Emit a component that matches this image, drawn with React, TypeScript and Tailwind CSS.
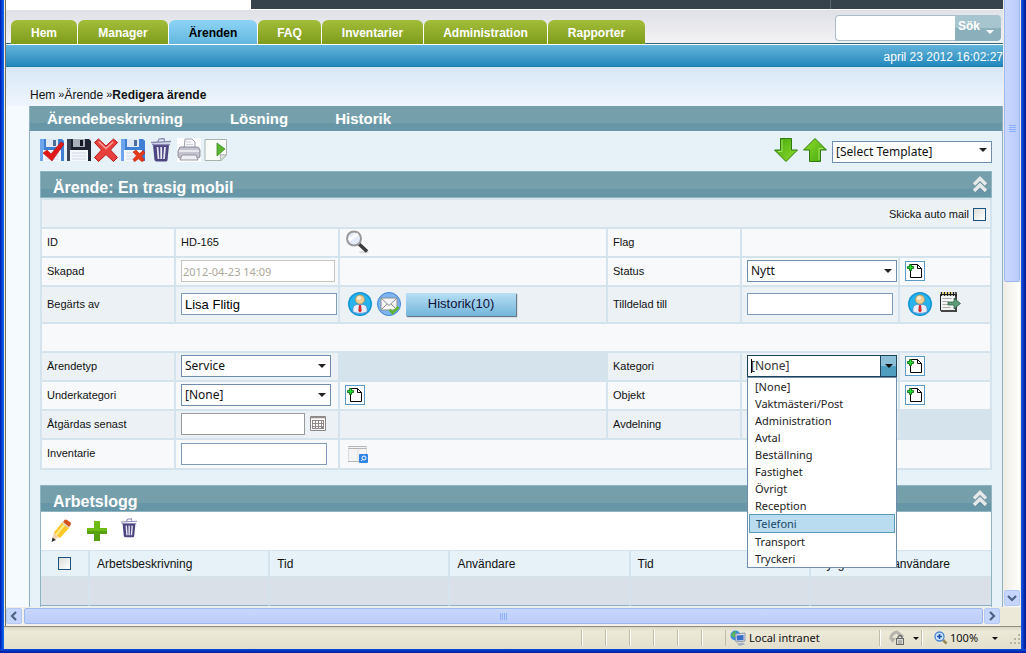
import type { ReactNode } from 'react'
import clsx from 'clsx'
import { twMerge } from 'tailwind-merge'

const tabs = [
  { label: 'Hem', width: 'w-[66px]' },
  { label: 'Manager', width: 'w-[90px]' },
  { label: 'Ärenden', width: 'w-[88px]', active: true },
  { label: 'FAQ', width: 'w-[63px]' },
  { label: 'Inventarier', width: 'w-[101px]' },
  { label: 'Administration', width: 'w-[123px]' },
  { label: 'Rapporter', width: 'w-[97px]' },
]

const categories = [
  '[None]',
  'Vaktmästeri/Post',
  'Administration',
  'Avtal',
  'Beställning',
  'Fastighet',
  'Övrigt',
  'Reception',
  'Telefoni',
  'Transport',
  'Tryckeri',
]

const logColumns = ['Arbetsbeskrivning', 'Tid', 'Användare', 'Tid', 'Nyligen valda användare']

/* ---------- icons ---------- */

function Floppy({ dark = false, children }: { dark?: boolean; children?: ReactNode }) {
  return (
    <svg viewBox="0 0 24 24" className="h-6 w-6">
      <path d="M0 1h22l2 2v20H0z" fill={dark ? '#1d2230' : '#3f7fd6'} />
      <path d="M0 1h4v22H0z" fill={dark ? '#3c4354' : '#6ea5ec'} />
      <rect x="6" y="1" width="12" height="8" fill={dark ? '#aab0bb' : '#dfe8f3'} />
      <rect x="13" y="2" width="3" height="6" fill={dark ? '#14171f' : '#4d6d9c'} />
      <rect x="3" y="12" width="18" height="11" fill="#f4f7fb" />
      <path d="M5 15h14M5 18h14M5 21h14" stroke="#cfd8e4" strokeWidth="1" />
      {children}
    </svg>
  )
}

function SaveCheckIcon() {
  return (
    <Floppy>
      <path d="M3 15l4-3 4 4L21 4l3 2-12 17z" fill="#e01818" stroke="#b80d0d" strokeWidth=".6" />
    </Floppy>
  )
}

function SaveDeleteIcon() {
  return (
    <Floppy>
      <path d="M12 14l3-2 3.500 3.500 4-3 1.500 2.500-3.500 3 3 4-2.500 1.800-3.500-3-4 3-1.500-2.500 3.500-3.500z" fill="#e63a1c" stroke="#c02410" strokeWidth=".6" />
    </Floppy>
  )
}

function CrossIcon() {
  return (
    <svg viewBox="0 0 24 24" className="h-6 w-6">
      <path
        d="M4.500 1L12 8l7.500-7L23.500 4.500 16.500 12l7 7.500-4 4-7.500-7-7.500 7L.5 19.500l7-7.500-7-7.500z"
        fill="#e8403c"
        stroke="#b51414"
        strokeWidth="1"
      />
      <path d="M4.500 3.500L12 10.500l7-6.500" fill="none" stroke="#f9a39d" strokeWidth="1.500" />
    </svg>
  )
}

function TrashIcon({ className }: { className?: string }) {
  return (
    <svg viewBox="2 0 20 24" className={twMerge('h-6 w-5', className)} fill="none">
      <path d="M4 7h16l-1.500 15q0 1.500-2 1.500H8q-2 0-2.500-1.500z" fill="#4c4680" />
      <path d="M8.500 9l1 12M12.200 9v12M16 9l-1 12" stroke="#e6e4f2" strokeWidth="1.800" />
      <path d="M2 4.500l20-1M9 3.500l1-2.500 5-.500.500 2.500M3 6.500h18" stroke="#8d8ab4" strokeWidth="1.300" />
    </svg>
  )
}

function PrinterIcon() {
  return (
    <svg viewBox="0 0 24 24" className="h-6 w-6">
      <rect width="24" height="24" fill="#fff" />
      <path d="M7 11l1-10h7l3 3v7z" fill="#f8f8fb" stroke="#9c9caa" />
      <path d="M9 4h5M9 6.500h7" stroke="#cdd0da" />
      <path d="M2 11q0-2 2-2h16q2 0 3 3v6q0 2-2 2H3q-2 0-2-2v-5z" fill="#c3c4cf" stroke="#777786" strokeWidth=".8" />
      <path d="M2 13h20" stroke="#f3f3f8" strokeWidth="1.500" />
      <path d="M5 17h14l2 5H3z" fill="#eeeef4" stroke="#83838f" strokeWidth=".8" />
    </svg>
  )
}

function PagePlayIcon() {
  return (
    <svg viewBox="0 0 24 24" className="h-6 w-6">
      <path d="M1 1.500h21.500V17L17 22.500H1z" fill="#fafcfa" stroke="#a9b3ad" />
      <path d="M22.500 17L17 22.500 16 16.500z" fill="#dfe5e1" stroke="#a9b3ad" />
      <path d="M13 5l8 6-8 7z" fill="#5cb531" stroke="#3c8a1c" strokeWidth=".8" />
    </svg>
  )
}

function ArrowIcon({ up = false }: { up?: boolean }) {
  return (
    <svg viewBox="0 0 24 24" className={clsx('h-6 w-6', up && 'rotate-180')}>
      <defs>
        <linearGradient id="arrowFill" x1="0" y1="0" x2="1" y2="1">
          <stop offset="0" stopColor="#45a80e" />
          <stop offset="1" stopColor="#8fdc2c" />
        </linearGradient>
      </defs>
      <path d="M6.500.5h11V12h6L12 23.500.5 12h6z" fill="url(#arrowFill)" stroke="#2c7a10" />
      <path d="M8 2v11.500H4" fill="none" stroke="#a5e463" strokeWidth="1" />
    </svg>
  )
}

function ChevronsIcon() {
  return (
    <svg viewBox="0 0 16 18" className="h-[18px] w-4" fill="none">
      <path d="M2 9l6-6 6 6M2 15.500l6-6 6 6" stroke="#4d7481" strokeWidth="4" opacity=".5" />
      <path d="M2 8.500l6-6 6 6M2 15l6-6 6 6" stroke="#e6e9ea" strokeWidth="3.500" />
    </svg>
  )
}

function SearchIcon() {
  return (
    <svg viewBox="0 0 24 24" className="h-6 w-6">
      <ellipse cx="19" cy="22" rx="5" ry="1" fill="#d5d7da" />
      <path d="M14 14l8 7.500" stroke="#3b3b3b" strokeWidth="3.500" />
      <circle cx="9" cy="8.500" r="7" fill="#e4ecfa" stroke="#999" strokeWidth="2" />
      <path d="M4 10l9-6" stroke="#fff" strokeWidth="3" />
    </svg>
  )
}

function PersonIcon() {
  return (
    <svg viewBox="0 0 24 24" className="h-6 w-6">
      <circle cx="12" cy="12" r="12" fill="#1495d8" />
      <circle cx="12" cy="12" r="10.500" fill="#27b3ec" />
      <path d="M5 20q-1-7 4-7.500h6q5 .5 4 7.500-7 3-14 0z" fill="#e6effb" stroke="#4f82c4" strokeWidth=".6" />
      <path d="M11 13h2l.7 6-1.700 1.500-1.700-1.500z" fill="#d8262c" />
      <circle cx="12" cy="7.500" r="4.500" fill="#f0cf94" stroke="#b58843" strokeWidth=".6" />
      <circle cx="11" cy="6" r="2" fill="#fbeccb" />
    </svg>
  )
}

function MailIcon() {
  return (
    <svg viewBox="0 0 24 24" className="h-6 w-6">
      <circle cx="12" cy="12" r="11.500" fill="#7db4ef" stroke="#3f84d4" />
      <path d="M4 6h16v12H4z" fill="#f5f5f3" stroke="#8b8f96" />
      <path d="M4 6l8 7.500L20 6M4 18l6-6M20 18l-6-6" fill="none" stroke="#8b8f96" />
      <path d="M12.500 17.500l3 3.500 6-6" fill="none" stroke="#5bb52b" strokeWidth="2.500" />
    </svg>
  )
}

function NotesIcon() {
  return (
    <svg viewBox="0 0 22 22" className="h-[22px] w-[22px]">
      <path d="M1.500 3.500h16v16h-16z" fill="#f4f4f4" stroke="#222" />
      <path d="M17 4v16M2 20h16" stroke="#444" strokeWidth="2" />
      <path d="M3.500 7.500h9M3.500 10.500h6M3.500 13.500h6M3.500 16.500h8" stroke="#aaa" />
      <path d="M2.500 1v4M5.500 1v4M8.500 1v4M11.500 1v4M14.500 1v4M17 1v4" stroke="#222" strokeWidth="1.500" />
      <path d="M3.500 1v2M6.500 1v2M9.500 1v2M12.500 1v2" stroke="#f0d24c" />
      <path d="M9 11h6V7l6.500 5.500L15 18v-4H9z" fill="#5d9b79" stroke="#255f42" strokeWidth=".7" />
    </svg>
  )
}

function CalendarIcon() {
  return (
    <svg viewBox="0 0 16 16" className="h-4 w-4">
      <path d="M.5.5h15v14H.5z" fill="#fff" stroke="#8c8585" />
      <path d="M1 1.500h14" stroke="#958f8f" strokeWidth="1.500" />
      <path d="M2 4h12v9H2z" fill="#8f8888" />
      <path d="M3 5h2v2H3zM6 5h2v2H6zM9 5h2v2H9zM12 5h1v2h-1zM3 8h2v2H3zM6 8h2v2H6zM9 8h2v2H9zM12 8h1v2h-1zM3 11h2v1H3zM6 11h2v1H6zM9 11h2v1H9z" fill="#fff" />
    </svg>
  )
}

function InventoryIcon() {
  return (
    <svg viewBox="0 0 20 18" className="h-[18px] w-5">
      <path d="M.5 1.500h18v15H.5z" fill="#f4f4f4" stroke="#dcdcdc" />
      <path d="M.5 1.500h18M.5 3.500h18M0 16.500h11" stroke="#b5b5b5" />
      <path d="M10 4v12" stroke="#e0e0e0" />
      <rect x="11" y="9" width="9" height="9" rx="1" fill="#2f86e4" />
      <circle cx="16" cy="13" r="2" fill="none" stroke="#fff" />
      <path d="M14.500 14.500L13 16" stroke="#fff" />
    </svg>
  )
}

function PencilIcon() {
  return (
    <svg viewBox="0 0 24 24" className="h-6 w-6">
      <path d="M3 21l2-8 6 5z" fill="#f1d3ad" />
      <path d="M2.500 23l1-4.500 3.500 2.500z" fill="#333" />
      <path d="M5 13.500L13.500 3l7 5.500L11 19z" fill="#fbc828" />
      <path d="M7 16l9-11" stroke="#fdeb8e" strokeWidth="2" />
      <path d="M14 3l1.500-2q1-1 2.500 0l3.500 2.500q1 1 0 2.500L20 8z" fill="#d4521d" />
      <path d="M13.500 3.500l6 5" stroke="#ddd3c4" strokeWidth="1.500" />
    </svg>
  )
}

function PlusIcon() {
  return (
    <svg viewBox="0 0 20 20" className="h-5 w-5">
      <path d="M7 0h6v7h7v6h-7v7H7v-7H0V7h7z" fill="#6fbb16" />
      <path d="M7 10h13v3h-7v7H7v-7H0v-3z" fill="#57a010" />
    </svg>
  )
}

function IntranetIcon() {
  return (
    <svg viewBox="0 0 16 16" className="h-4 w-4">
      <circle cx="5.500" cy="5.500" r="5" fill="#3c8fe0" />
      <path d="M1 5q2-4 6-4-3 2-1 5-3 3-5-1z" fill="#58b856" />
      <path d="M5 4l10-1v8l-9 1z" fill="#d8dde8" stroke="#7d879c" strokeWidth=".8" />
      <path d="M6.500 5.500L13.500 5v5l-6.500.5z" fill="#3a6ec8" />
      <path d="M7 13.500l6-1 2 2-6 1.500z" fill="#a9b0c0" />
    </svg>
  )
}

function LockIcon() {
  return (
    <svg viewBox="0 0 16 16" className="h-4 w-4" fill="none">
      <path d="M2 9q0-6 6-7l6 5" stroke="#b5b5ae" strokeWidth="3" />
      <path d="M0 8l3.500 5L7 8z" fill="#b5b5ae" />
      <path d="M9 9V7q2-3 4 0v2" stroke="#666" strokeWidth="1.300" />
      <rect x="7.500" y="8.500" width="7" height="6" fill="#dcdcd6" stroke="#666" />
      <path d="M9 11h4M9 13h4" stroke="#888" />
    </svg>
  )
}

function ZoomIcon() {
  return (
    <svg viewBox="0 0 14 14" className="h-[14px] w-[14px]">
      <path d="M9 9l3.500 3.500" stroke="#9a8a58" strokeWidth="2.500" />
      <circle cx="5.500" cy="5.500" r="4.500" fill="#d4e8fd" stroke="#4b86d4" strokeWidth="1.300" />
      <path d="M3 5.500h5M5.500 3v5" stroke="#1c50b4" strokeWidth="1.600" />
    </svg>
  )
}

function Caret({ className }: { className?: string }) {
  return (
    <svg viewBox="0 0 8 4" className={twMerge('pointer-events-none h-1 w-2', className)}>
      <path d="M0 0h8L4 4z" fill="currentColor" />
    </svg>
  )
}

/* ---------- form parts ---------- */

function Cell({ children, light, className }: { children?: ReactNode; light?: boolean; className?: string }) {
  return (
    <div className={twMerge('flex min-w-0 items-center pb-px pl-[5px]', light ? 'bg-[#f7f9fb]' : 'bg-[#ecf1f6]', className)}>
      {children}
    </div>
  )
}

function Select({ id, value, label, className }: { id: string; value: string; label?: string; className?: string }) {
  return (
    <div className={clsx('relative h-[22px]', className)}>
      <select
        id={id}
        aria-label={label}
        className="h-full w-full appearance-none border border-[#6f8dae] bg-white pl-[3px] font-['Noto_Sans',sans-serif] text-xs text-[#111]"
      >
        <option>{value}</option>
      </select>
      <Caret className="absolute right-[5px] top-[9px] text-[#222]" />
    </div>
  )
}

function CategorySelect() {
  return (
    <div className="relative h-[22px] w-[150px]">
      <select
        id="kategori"
        defaultValue="[None]"
        className="h-full w-full appearance-none border border-[#1c4257] bg-white pl-[3px] font-['Noto_Sans',sans-serif] text-xs text-[#333]"
      >
        {categories.map((name) => (
          <option key={name}>{name}</option>
        ))}
      </select>
      <span className="absolute left-1 top-1 h-[14px] w-px bg-black" />
      <span className="pointer-events-none absolute right-px top-px flex h-5 w-4 items-center justify-center border-l border-[#1c4257] bg-linear-to-b from-[#8cc0d8] from-50% to-[#4f9dbf] to-50% text-[#111]">
        <Caret />
      </span>
      <ul
        role="listbox"
        aria-label="Kategori"
        className="absolute left-0 top-[22px] z-10 w-[150px] border border-[#6f8dae] bg-white px-px font-['Noto_Sans',sans-serif] text-[11px] leading-[17px] text-[#222]"
      >
        {categories.map((name) => (
          <li
            key={name}
            role="option"
            aria-selected={name === 'Telefoni'}
            className={clsx(
              'border-[#5b9bb8] pl-[6px]',
              name === 'Telefoni' && 'border bg-[#b9dcf1] text-[#1c4a66]',
            )}
          >
            {name}
          </li>
        ))}
      </ul>
    </div>
  )
}

function AddButton({ label }: { label: string }) {
  return (
    <button
      type="button"
      aria-label={label}
      className="flex h-5 w-5 items-center justify-center border border-[#5b9bc8] bg-white"
    >
      <svg viewBox="0 0 18 18" className="h-[18px] w-[18px]">
        <path d="M4.500 2.500h7l4 4v9h-11z" fill="#fff" stroke="#000" />
        <path d="M11.500 2.500v4h4" fill="none" stroke="#000" />
        <path d="M3.500 2.500h2v2h2v2h-2v2h-2v-2h-2v-2h2z" fill="#1fe02a" stroke="#075c0b" strokeWidth=".8" />
      </svg>
    </button>
  )
}

function TextInput({ id, value, className }: { id: string; value?: string; className?: string }) {
  return (
    <input
      id={id}
      defaultValue={value}
      className={twMerge('h-[22px] border border-[#7f9db9] bg-white px-[3px] text-[13px] text-black', className)}
    />
  )
}

function Checkbox({ id, label }: { id: string; label?: string }) {
  return (
    <input
      id={id}
      aria-label={label}
      type="checkbox"
      className="h-[13px] w-[13px] appearance-none border border-[#1c5180] bg-linear-to-br from-[#dcdcd7] to-white"
    />
  )
}

function SectionHeader({ title }: { title: string }) {
  return (
    <div className="flex h-[27px] items-center justify-between border border-[#8fb5c0] bg-linear-to-b from-[#769fac] from-70% to-[#6797a7] to-70% pl-3 pr-[3px]">
      <h2 className="pt-[6px] text-base font-bold leading-5 text-white">{title}</h2>
      <button aria-label={'Fäll ihop ' + title}>
        <ChevronsIcon />
      </button>
    </div>
  )
}

function TicketForm() {
  return (
    <section>
      <SectionHeader title="Ärende: En trasig mobil" />
      <form className="grid grid-cols-[132px_162px_1fr_132px_156px_90px] grid-rows-[27px_27px_27px_35px_27px_27px_27px_27px_28px] gap-[2px] bg-[#d5e4ec] p-[2px] text-[11px] text-[#111]">
        <Cell className="col-span-6 justify-end gap-1 pb-0 pr-1 pt-px">
          <label htmlFor="automail">Skicka auto mail</label>
          <Checkbox id="automail" />
        </Cell>

        <Cell light>ID</Cell>
        <Cell light>HD-165</Cell>
        <Cell light>
          <button type="button" aria-label="Sök ärende">
            <SearchIcon />
          </button>
        </Cell>
        <Cell light>Flag</Cell>
        <Cell light className="col-span-2" />

        <Cell light>
          <label htmlFor="skapad">Skapad</label>
        </Cell>
        <Cell light>
          <input
            id="skapad"
            disabled
            defaultValue="2012-04-23 14:09"
            className="h-[22px] w-[154px] border border-[#c5c5bf] bg-white pl-px font-['Noto_Sans',sans-serif] text-[11px] text-[#aca899]"
          />
        </Cell>
        <Cell light />
        <Cell light>
          <label htmlFor="status">Status</label>
        </Cell>
        <Cell light>
          <Select id="status" value="Nytt" className="w-[150px]" />
        </Cell>
        <Cell light>
          <AddButton label="Ny status" />
        </Cell>

        <Cell>
          <label htmlFor="begarts">Begärts av</label>
        </Cell>
        <Cell>
          <TextInput id="begarts" value="Lisa Flitig" className="w-[156px]" />
        </Cell>
        <Cell className="gap-[5px] px-2">
          <button type="button" aria-label="Välj person">
            <PersonIcon />
          </button>
          <button type="button" aria-label="Skicka mail">
            <MailIcon />
          </button>
          <button
            type="button"
            className="h-[23px] w-[110px] bg-linear-to-b from-[#b8e0f4] to-[#71b5da] text-[13px] text-[#10103a] shadow-[1px_1px_1px_#6b7a84]"
          >
            Historik(10)
          </button>
        </Cell>
        <Cell>
          <label htmlFor="tilldelad">Tilldelad till</label>
        </Cell>
        <Cell>
          <TextInput id="tilldelad" className="w-[146px]" />
        </Cell>
        <Cell className="gap-[7px] px-2">
          <button type="button" aria-label="Välj handläggare">
            <PersonIcon />
          </button>
          <button type="button" aria-label="Tilldela" className="pb-1">
            <NotesIcon />
          </button>
        </Cell>

        <Cell light className="col-span-6" />

        <Cell>
          <label htmlFor="typ">Ärendetyp</label>
        </Cell>
        <Cell>
          <Select id="typ" value="Service" className="w-[150px]" />
        </Cell>
        <div />
        <Cell>
          <label htmlFor="kategori">Kategori</label>
        </Cell>
        <Cell>
          <CategorySelect />
        </Cell>
        <Cell>
          <AddButton label="Ny kategori" />
        </Cell>

        <Cell light>
          <label htmlFor="underkategori">Underkategori</label>
        </Cell>
        <Cell light>
          <Select id="underkategori" value="[None]" className="w-[150px]" />
        </Cell>
        <Cell light>
          <AddButton label="Ny underkategori" />
        </Cell>
        <Cell light>Objekt</Cell>
        <Cell light />
        <Cell light>
          <AddButton label="Nytt objekt" />
        </Cell>

        <Cell>
          <label htmlFor="atgardas">Åtgärdas senast</label>
        </Cell>
        <Cell className="gap-[5px]">
          <TextInput id="atgardas" className="w-[124px] border-[#999]" />
          <button type="button" aria-label="Välj datum">
            <CalendarIcon />
          </button>
        </Cell>
        <Cell />
        <Cell>Avdelning</Cell>
        <Cell />
        <div />

        <Cell light>
          <label htmlFor="inventarie">Inventarie</label>
        </Cell>
        <Cell light>
          <TextInput id="inventarie" className="w-[146px]" />
        </Cell>
        <Cell light className="col-span-4 px-2">
          <button type="button" aria-label="Sök inventarie">
            <InventoryIcon />
          </button>
        </Cell>
      </form>
    </section>
  )
}

function WorkLog() {
  return (
    <section className="mt-[15px]">
      <SectionHeader title="Arbetslogg" />
      <div className="border-x border-[#8fb5c0] bg-white">
        <div className="flex h-[38px] items-center gap-[14px] pl-2">
          <button aria-label="Redigera">
            <PencilIcon />
          </button>
          <button aria-label="Lägg till">
            <PlusIcon />
          </button>
          <button aria-label="Ta bort" className="pb-[6px]">
            <TrashIcon className="h-5 w-4" />
          </button>
        </div>
        <table className="w-full table-fixed border-separate border-spacing-0 text-xs text-[#111]">
          <thead>
            <tr className="h-[27px] bg-[#e6f2f7]">
              <th className="w-[49px] border-y border-r-2 border-[#d5e4ec] p-0 text-center">
                <div className="flex justify-center">
                  <Checkbox id="markera" label="Markera alla" />
                </div>
              </th>
              {logColumns.map((name, i) => (
                <th
                  key={i}
                  className="whitespace-nowrap border-y border-r-2 border-[#d5e4ec] p-0 pl-[7px] text-left font-normal last:border-r-0"
                >
                  {name}
                </th>
              ))}
            </tr>
          </thead>
          <tbody>
            <tr className="h-[29px] bg-[#dae0e7]">
              <td className="border-b border-r-2 border-b-[#8fb0c0] border-r-[#d5e4ec]" />
              {logColumns.map((_, i) => (
                <td key={i} className="border-b border-r-2 border-b-[#8fb0c0] border-r-[#d5e4ec] last:border-r-0" />
              ))}
            </tr>
            <tr className="h-[29px] bg-[#e6f2f7]">
              <td colSpan={6} />
            </tr>
          </tbody>
        </table>
      </div>
    </section>
  )
}

/* ---------- page ---------- */

function TopNav() {
  return (
    <header>
      <div className="flex h-[9px] bg-[#36434d]">
        <div className="w-[245px] bg-white" />
        <div className="flex-1 border-r border-[#5b6872]" />
        <div className="w-[172px]" />
      </div>
      <div className="flex h-[35px] items-end justify-between border-t border-white bg-linear-to-b from-[#e0e1e7] to-[#f3f3f5] pl-[5px] pr-[2px] shadow-[inset_0_-1px_0_#2f6675]">
        <nav className="flex h-6 gap-px bg-linear-to-b from-transparent from-20% to-white to-20%">
          {tabs.map((tab) => (
            <a
              key={tab.label}
              href="#"
              className={clsx(
                'flex items-center justify-center rounded-t-md pt-px text-xs font-bold',
                tab.width,
                tab.active
                  ? 'bg-linear-to-b from-[#8dd4f6] to-[#63b7de] text-black'
                  : 'bg-linear-to-b from-[#a2bd38] to-[#7f9c1c] text-white',
              )}
            >
              {tab.label}
            </a>
          ))}
        </nav>
        <div className="mb-[3px] flex h-[26px]">
          <input
            aria-label="Sök"
            className="w-[120px] rounded-l-sm border border-r-0 border-[#a9bcc8] bg-white px-1 text-xs"
          />
          <button className="flex w-[46px] justify-between rounded-r-sm bg-linear-to-b from-[#a6c5ce] from-50% to-[#8bb0bb] to-50% px-[3px] pt-[3px] text-xs font-bold text-white">
            Sök
            <Caret className="mr-1 mt-3 text-white" />
          </button>
        </div>
      </div>
      <div className="flex h-[23px] items-center justify-end border-b border-t border-b-[#1c7ca6] border-t-white bg-linear-to-b from-[#62b4da] to-[#2089bd] pt-[3px] text-xs text-white">
        april 23 2012 16:02:27
      </div>
    </header>
  )
}

function Page() {
  return (
    <main className="min-w-0 flex-1 overflow-hidden bg-[#f5fafe]">
      <TopNav />
      <div className="flex h-[39px] items-center bg-linear-to-b from-[#d6e8f5] to-[#f0f5fe] pl-6 pt-4 text-xs text-[#111]">
        <a href="#">Hem</a>
        <span className="ml-[3px] text-[11px]">»</span>
        <a href="#">Ärende</a>
        <span className="ml-[3px] text-[11px]">»</span>
        <b>Redigera ärende</b>
      </div>
      <div className="ml-[23px] border-x border-[#8fb0c0] bg-[#e6f2f7]">
        <nav className="flex h-[25px] items-center gap-[47px] bg-linear-to-b from-[#769fac] from-70% to-[#6797a7] to-70% pl-[17px] pt-[2px] text-[15px] font-bold text-white">
          <a href="#">Ärendebeskrivning</a>
          <a href="#">Lösning</a>
          <a href="#">Historik</a>
        </nav>
        <div className="px-[10px]">
          <div className="mb-[3px] flex h-[37px] items-center justify-between">
            <div className="flex items-center gap-[3px]">
              <button aria-label="Spara och stäng">
                <SaveCheckIcon />
              </button>
              <button aria-label="Spara">
                <Floppy dark />
              </button>
              <button aria-label="Stäng">
                <CrossIcon />
              </button>
              <button aria-label="Ta bort sparat">
                <SaveDeleteIcon />
              </button>
              <button aria-label="Ta bort" className="px-[3px]">
                <TrashIcon />
              </button>
              <button aria-label="Skriv ut">
                <PrinterIcon />
              </button>
              <button aria-label="Nästa">
                <PagePlayIcon />
              </button>
            </div>
            <div className="flex items-center gap-[5px]">
              <button aria-label="Ned">
                <ArrowIcon />
              </button>
              <button aria-label="Upp">
                <ArrowIcon up />
              </button>
              <Select id="template" label="Mall" value="[Select Template]" className="w-40" />
            </div>
          </div>
          <TicketForm />
          <WorkLog />
        </div>
      </div>
    </main>
  )
}

function ScrollButton({ direction, className }: { direction: 'left' | 'right' | 'down'; className?: string }) {
  const paths = { left: 'M7 1L3 5l4 4', right: 'M3 1l4 4-4 4', down: 'M1 3l4 4 4-4' }
  return (
    <button
      aria-label={'Rulla ' + direction}
      className={clsx(
        'flex h-4 w-4 shrink-0 items-center justify-center rounded-xs border border-[#b4c8f4] bg-[#c6d5fc]',
        className,
      )}
    >
      <svg viewBox="0 0 10 10" className="h-[10px] w-[10px]" fill="none">
        <path d={paths[direction]} stroke="#4d6185" strokeWidth="2.200" />
      </svg>
    </button>
  )
}

function StatusBar() {
  return (
    <footer className="flex h-[23px] items-stretch border-t border-[#8f8d7e] bg-linear-to-b from-[#d9d6c4] via-[#ece9d8] via-20% to-[#e2dfcc] py-[3px] font-['Noto_Sans',sans-serif] text-[11px] leading-4 text-[#111]">
      <div className="flex-1" />
      {[0, 1, 2, 3, 4, 5].map((n) => (
        <div key={n} className="w-6 border-l border-[#c0bda8] shadow-[inset_1px_0_0_#fff]" />
      ))}
      <div className="flex w-[154px] items-center gap-[3px] border-l border-[#c0bda8] pl-1">
        <IntranetIcon />
        Local intranet
      </div>
      <div className="flex w-[42px] items-center gap-2 border-l border-[#c0bda8] pl-[9px] shadow-[inset_1px_0_0_#fff]">
        <LockIcon />
        <Caret className="h-[3px] w-[6px]" />
      </div>
      <div className="flex w-[100px] items-center border-l border-[#c0bda8] pl-3 shadow-[inset_1px_0_0_#fff]">
        <ZoomIcon />
        <span className="ml-[2px] w-[42px]">100%</span>
        <Caret className="h-[3px] w-[6px]" />
        <svg viewBox="0 0 12 12" className="ml-auto h-3 w-3 self-end" fill="#b8b5a0">
          <path d="M9 0h2v2H9zM5 4h2v2H5zM9 4h2v2H9zM1 8h2v2H1zM5 8h2v2H5zM9 8h2v2H9z" />
        </svg>
      </div>
    </footer>
  )
}

export default function App() {
  return (
    <div className="flex h-screen flex-col bg-[#0a2fd0] font-['Liberation_Sans',Arial,sans-serif]">
      <div className="flex min-h-0 flex-1">
        <div className="w-1 bg-linear-to-r from-[#0014b4] to-[#1a6af4]" />
        <div className="flex min-w-0 flex-1 flex-col">
          <div className="flex min-h-0 flex-1 border-l border-[#ece9d8] bg-white">
            <div className="flex min-w-0 flex-1 flex-col border-l border-[#716f64]">
              <div className="flex min-h-0 flex-1">
                <Page />
                <div className="flex w-[18px] flex-col justify-between border-r border-[#ece9d8] bg-linear-to-r from-[#efede4] to-[#fefefb] pb-px pl-px">
                  <div className="flex h-[282px] items-center justify-center rounded-b-xs border border-t-0 border-[#9db8ef] bg-linear-to-r from-[#c9d7fd] to-[#b9cbf8]">
                    <div className="mb-6 flex flex-col gap-px">
                      <div className="h-px w-[7px] bg-[#8cb0f8]" />
                      <div className="h-px w-[7px] bg-[#8cb0f8]" />
                      <div className="h-px w-[7px] bg-[#8cb0f8]" />
                      <div className="h-px w-[7px] bg-[#8cb0f8]" />
                    </div>
                  </div>
                  <ScrollButton direction="down" />
                </div>
              </div>
              <div className="flex h-[19px] items-start border-t border-[#efede4] bg-[#f3f1ea]">
                <ScrollButton direction="left" />
                <div className="ml-[2px] flex h-4 flex-1 items-center justify-center gap-px rounded-xs border border-[#9db8ef] bg-linear-to-b from-[#c9d7fd] to-[#bccdf9]">
                  <div className="h-[7px] w-px bg-[#8cb0f8]" />
                  <div className="h-[7px] w-px bg-[#8cb0f8]" />
                  <div className="h-[7px] w-px bg-[#8cb0f8]" />
                  <div className="h-[7px] w-px bg-[#8cb0f8]" />
                </div>
                <ScrollButton direction="right" className="ml-px" />
                <div className="h-full w-[21px] bg-[#ece9d8]" />
              </div>
            </div>
          </div>
          <StatusBar />
        </div>
        <div className="w-[5px] bg-linear-to-r from-[#1a5af0] to-[#00138c]" />
      </div>
      <div className="h-1 bg-linear-to-b from-[#0a48e0] to-[#001c9c]" />
    </div>
  )
}
